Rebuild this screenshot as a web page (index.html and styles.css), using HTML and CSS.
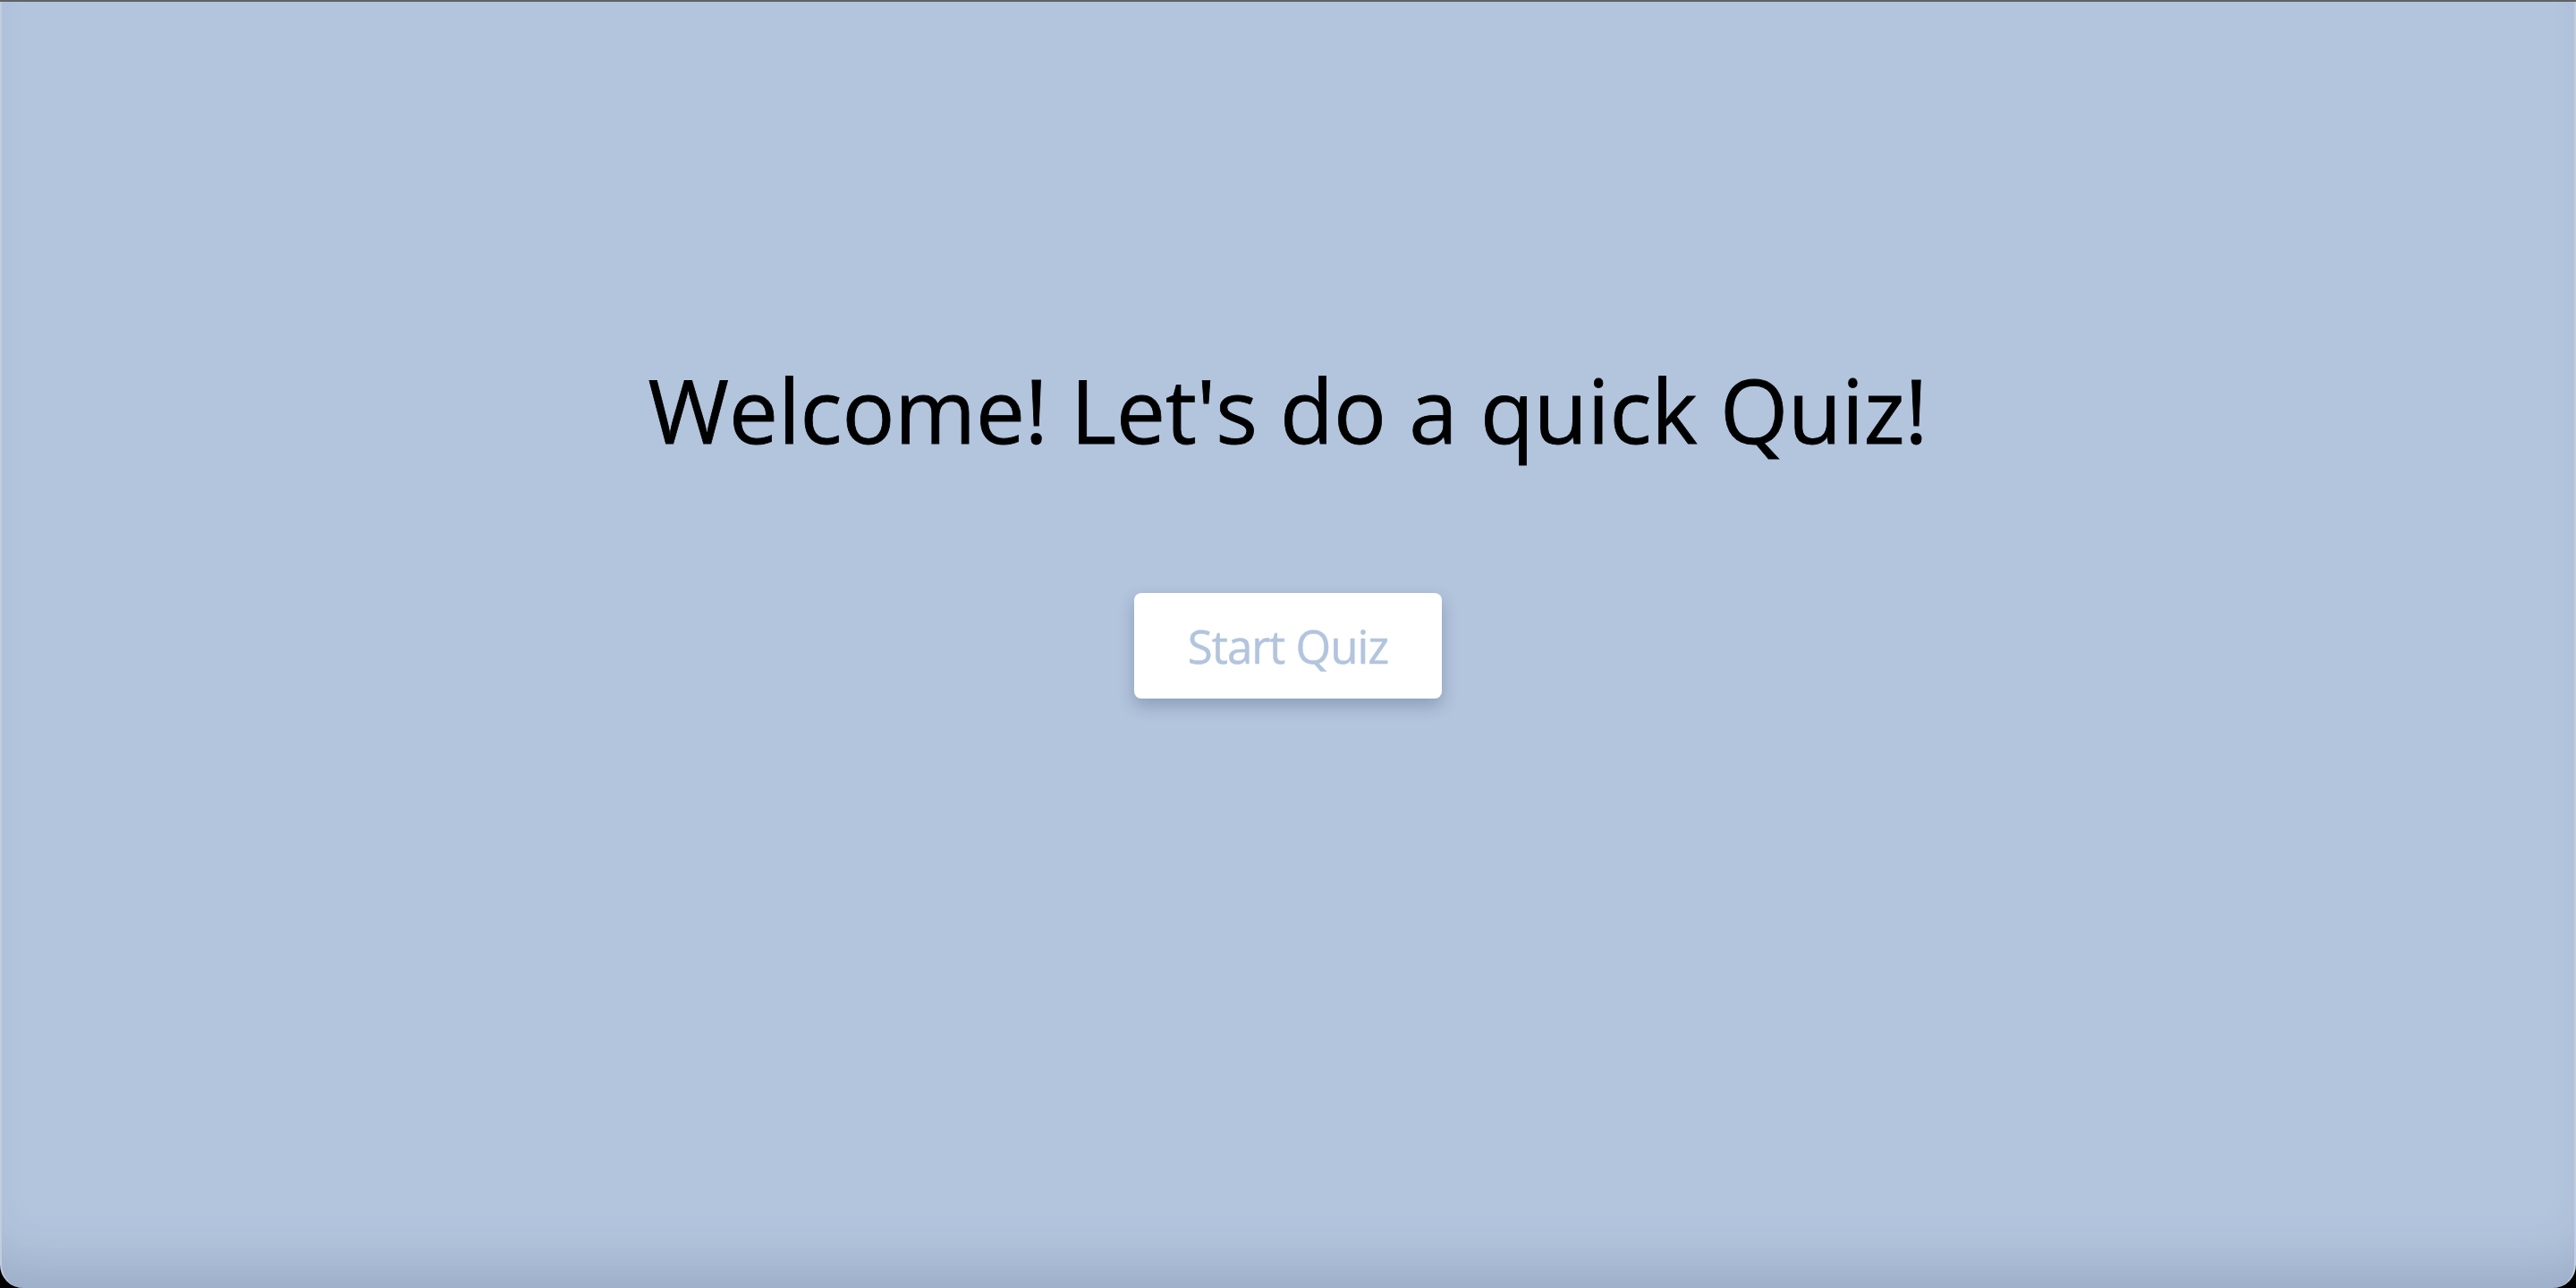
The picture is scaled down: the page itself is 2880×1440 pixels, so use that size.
FILE: index.html
```html
<!DOCTYPE html>
<html lang="en">
<head>
<meta charset="utf-8">
<title>Quiz</title>
<link rel="stylesheet" href="styles.css">
</head>
<body>
<div class="window">
  <main class="page">
    <h1 class="title">Welcome! Let's do a quick Quiz!</h1>
    <button class="start-btn" type="button">Start Quiz</button>
  </main>
</div>
</body>
</html>
```

FILE: styles.css
```css
html, body {
  margin: 0;
  padding: 0;
  height: 100%;
}

body {
  background: #000;
  font-family: "Open Sans", "Liberation Sans", sans-serif;
}

.window {
  height: 100%;
  box-sizing: border-box;
  border-top: 2px solid #5f6166;
  background: #000;
}

.page {
  box-sizing: border-box;
  height: 100%;
  background: #b3c4dd;
  border-left: 2px solid #c1cde0;
  border-right: 2px solid #c1cde0;
  border-radius: 0 0 26px 26px;
  box-shadow: inset 0 -60px 60px -40px rgba(60, 80, 110, 0.22);
  display: flex;
  flex-direction: column;
  align-items: center;
  padding-top: 396px;
}

.title {
  margin: 0;
  font-size: 98px;
  line-height: 120px;
  font-weight: 400;
  color: #000;
  letter-spacing: -0.1px;
  -webkit-text-stroke: 0.8px #000;
}

.start-btn {
  margin-top: 145px;
  width: 344px;
  height: 118px;
  border: none;
  border-radius: 8px;
  background: #fff;
  color: #b3c4dd;
  font-family: "Open Sans", "Liberation Sans", sans-serif;
  font-size: 51px;
  font-weight: 400;
  letter-spacing: -1px;
  -webkit-text-stroke: 0.5px #b3c4dd;
  box-shadow: 0 8px 18px rgba(40, 60, 90, 0.28);
  display: flex;
  align-items: center;
  justify-content: center;
  padding: 0;
}
```
